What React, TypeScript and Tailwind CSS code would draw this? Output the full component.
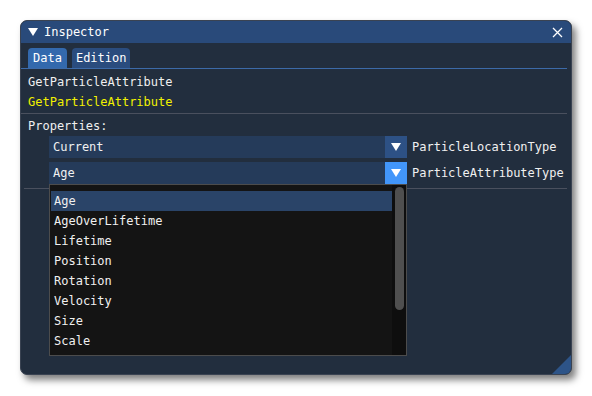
import React from 'react';

const items = ['Age', 'AgeOverLifetime', 'Lifetime', 'Position', 'Rotation', 'Velocity', 'Size', 'Scale'];

const Arrow = () => (
  <svg width="10" height="8" viewBox="0 0 10 8" className="shrink-0">
    <path d="M0 0 L10 0 L5 8 Z" fill="#ffffff" />
  </svg>
);

const Combo = ({ value, label, active = false }: { value: string; label: string; active?: boolean }) => (
  <div className="flex items-center h-[22px] ml-[21px]">
    <div className="w-[336px] h-full bg-[#253b5a] flex items-center px-1">{value}</div>
    <div
      className={`w-[22px] h-full flex items-center justify-center ${active ? 'bg-[#4296fa]' : 'bg-[#2d5185]'}`}
    >
      <Arrow />
    </div>
    <span className="ml-[5px]">{label}</span>
  </div>
);

export default function App() {
  return (
    <div
      className="w-[592px] h-[396px] bg-white pt-[20px] pl-[20px] text-[12px] text-[#f0f0f0]"
      style={{ fontFamily: '"DejaVu Sans Mono", "Liberation Mono", monospace' }}
    >
      <div className="relative w-[552px] h-[355px] rounded-[7px] bg-[#222e3e] border border-[#3a4352] shadow-[4px_5px_7px_rgba(0,0,0,0.5)] overflow-hidden flex flex-col">
        {/* Title bar */}
        <div className="h-[22px] bg-[#294a7a] flex items-center pl-[7px] pr-[6px] shrink-0">
          <Arrow />
          <span className="ml-[6px] text-white">Inspector</span>
          <svg width="11" height="11" viewBox="0 0 11 11" className="ml-auto mr-[2px]">
            <path d="M1 1 L10 10 M10 1 L1 10" stroke="#ffffff" strokeWidth="1.3" />
          </svg>
        </div>

        {/* Tabs */}
        <div className="mt-[5px] flex gap-[5px] pl-[7px] h-[20px] shrink-0">
          <div className="bg-[#3369ad] rounded-t-[4px] px-[5px] flex items-center text-white">Data</div>
          <div className="bg-[#2a4c7e] rounded-t-[4px] px-[4px] flex items-center text-white">Edition</div>
        </div>
        <div className="h-px bg-[#3c6aa8] mr-[4px] shrink-0" />

        <div className="pl-[7px] mt-[3px] h-[20px] flex items-center">GetParticleAttribute</div>
        <div className="pl-[7px] h-[20px] flex items-center text-[#f2f200]">GetParticleAttribute</div>
        <div className="h-px bg-[#4a505e] mr-[4px] mt-[1px]" />

        <div className="pl-[7px] mt-[2px] h-[20px] flex items-center">Properties:</div>
        <div className="pl-[7px] flex flex-col gap-[4px]">
          <Combo value="Current" label="ParticleLocationType" />
          <Combo value="Age" label="ParticleAttributeType" active />
        </div>
        <div className="h-px bg-[#4a505e] mr-[4px] ml-[3px] mt-[4px]" />

        {/* Popup list */}
        <div className="absolute left-[28px] top-[163px] w-[358px] h-[172px] bg-[#141414] border border-[#4c4c4c] flex">
          <div className="flex-1 pt-[6px] pl-[1px]">
            {items.map((it, i) => (
              <div
                key={it}
                className={`h-[20px] flex items-center pl-[3px] ${i === 0 ? 'bg-[#2a4468]' : ''}`}
              >
                {it}
              </div>
            ))}
          </div>
          <div className="w-[14px] bg-[#0e0e0e] pt-[2px] flex justify-center">
            <div className="w-[9px] h-[123px] rounded-[5px] bg-[#4f4f4f]" />
          </div>
        </div>

        {/* Resize grip */}
        <svg width="19" height="19" viewBox="0 0 19 19" className="absolute right-0 bottom-0">
          <path d="M19 0 L19 19 L0 19 Z" fill="#2d5488" />
        </svg>
      </div>
    </div>
  );
}
